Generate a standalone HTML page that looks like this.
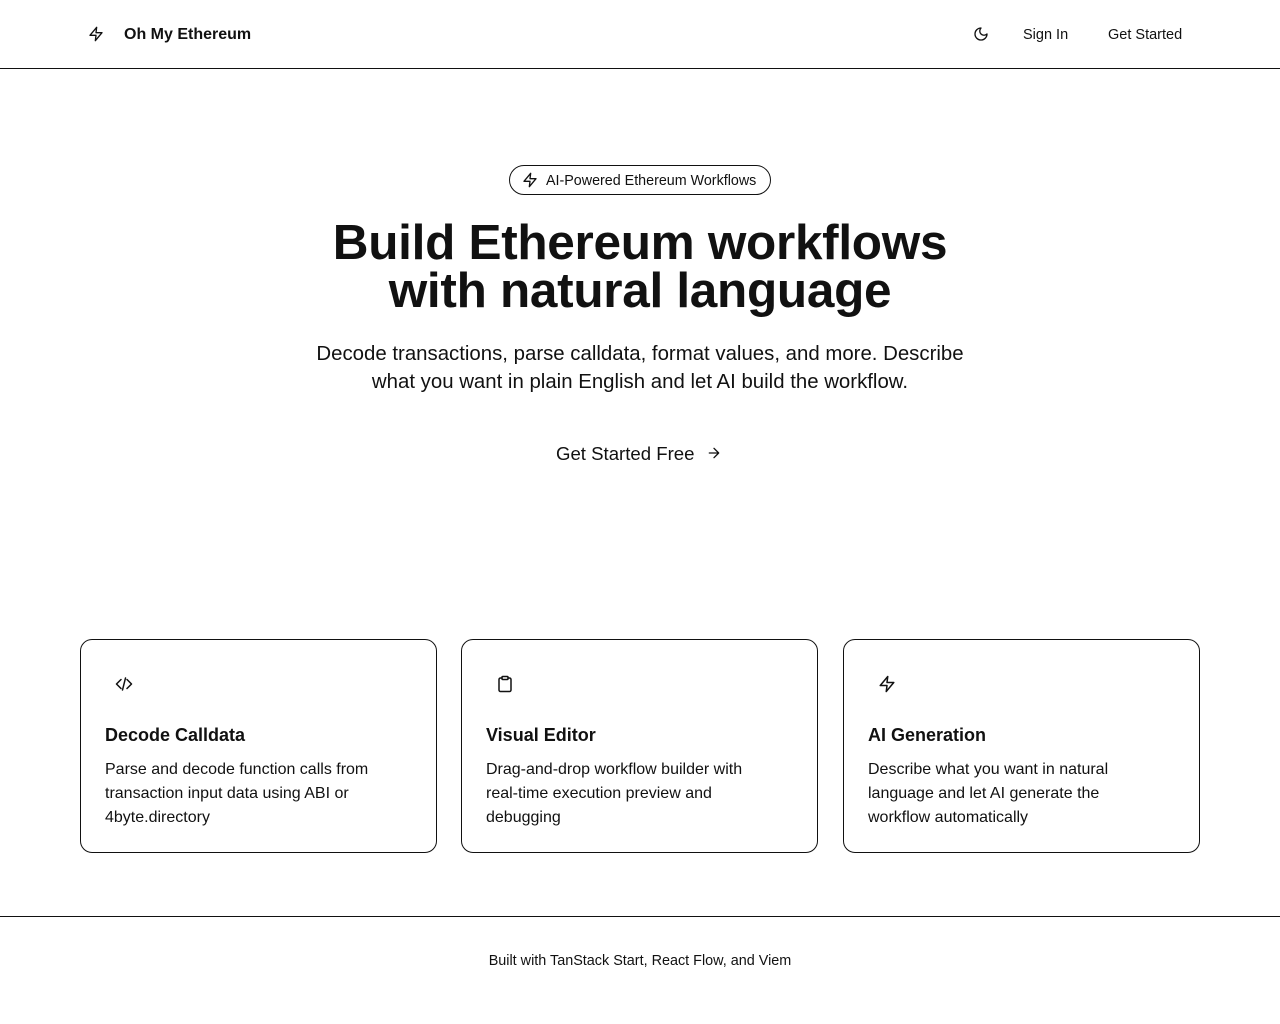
<!DOCTYPE html>
<html><head><meta charset="utf-8"><style>
*{box-sizing:border-box;margin:0;padding:0}
body{width:1280px;height:1024px;background:#fff;color:#111;font-family:"Liberation Sans",sans-serif;position:relative;overflow:hidden}
.abs{position:absolute}
svg{fill:none;stroke:#111;stroke-width:2;stroke-linecap:round;stroke-linejoin:round}
.hdr{top:0;left:0;width:1280px;height:69px;border-bottom:1px solid #111}
.card{position:absolute;top:639px;width:357px;height:214px;border:1px solid #111;border-radius:12px}
.card h3{position:absolute;left:24px;top:85px;font-size:18px;font-weight:bold}
.card p{position:absolute;left:24px;top:118px;width:282px;font-size:16px;line-height:24px}
.card svg{position:absolute;left:34px;top:35px}
</style></head><body>
<div class="abs hdr"></div>
<svg class="abs" style="left:88px;top:26px" width="16" height="16" viewBox="0 0 24 24"><path d="M13 2 3 14h9l-1 8 10-12h-9l1-8z"/></svg>
<div class="abs" style="left:124px;top:26px;font-size:16px;font-weight:bold">Oh My Ethereum</div>
<svg class="abs" style="left:973px;top:26px" width="16" height="16" viewBox="0 0 24 24"><path d="M12 3a6 6 0 0 0 9 9 9 9 0 1 1-9-9z"/></svg>
<div class="abs" style="left:1023px;top:27px;font-size:14.5px">Sign In</div>
<div class="abs" style="left:1108px;top:27px;font-size:14.5px">Get Started</div>

<div class="abs" style="left:509px;top:165px;width:262px;height:30px;border:1px solid #111;border-radius:15px"></div>
<svg class="abs" style="left:522px;top:172px" width="16" height="16" viewBox="0 0 24 24"><path d="M13 2 3 14h9l-1 8 10-12h-9l1-8z"/></svg>
<div class="abs" style="left:546px;top:173px;font-size:14.3px">AI-Powered Ethereum Workflows</div>

<div class="abs" style="left:0;width:1280px;top:219px;text-align:center;font-size:49.5px;font-weight:bold;line-height:48px;letter-spacing:-0.3px">Build Ethereum workflows<br>with natural language</div>
<div class="abs" style="left:0;width:1280px;top:340px;text-align:center;font-size:20.4px;line-height:28px">Decode transactions, parse calldata, format values, and more. Describe<br>what you want in plain English and let AI build the workflow.</div>
<div class="abs" style="left:556px;top:443px;font-size:18.6px">Get Started Free</div>
<svg class="abs" style="left:706px;top:445px" width="16" height="16" viewBox="0 0 24 24"><path d="M5 12h14M12 5l7 7-7 7"/></svg>

<div class="card" style="left:80px"><svg width="18" height="18" viewBox="0 0 24 24"><path d="m16 18 6-6-6-6M8 6l-6 6 6 6M14 4l-4 16"/></svg><h3>Decode Calldata</h3><p>Parse and decode function calls from transaction input data using ABI or 4byte.directory</p></div>
<div class="card" style="left:461px"><svg width="18" height="18" viewBox="0 0 24 24"><rect x="8" y="2" width="8" height="4" rx="1"/><path d="M16 4h2a2 2 0 0 1 2 2v14a2 2 0 0 1-2 2H6a2 2 0 0 1-2-2V6a2 2 0 0 1 2-2h2"/></svg><h3>Visual Editor</h3><p>Drag-and-drop workflow builder with<br>real-time execution preview and debugging</p></div>
<div class="card" style="left:843px"><svg width="18" height="18" viewBox="0 0 24 24"><path d="M13 2 3 14h9l-1 8 10-12h-9l1-8z"/></svg><h3>AI Generation</h3><p>Describe what you want in natural language and let AI generate the workflow automatically</p></div>

<div class="abs" style="left:0;top:916px;width:1280px;border-top:1px solid #111"></div>
<div class="abs" style="left:0;width:1280px;top:953px;text-align:center;font-size:14.4px">Built with TanStack Start, React Flow, and Viem</div>
</body></html>
